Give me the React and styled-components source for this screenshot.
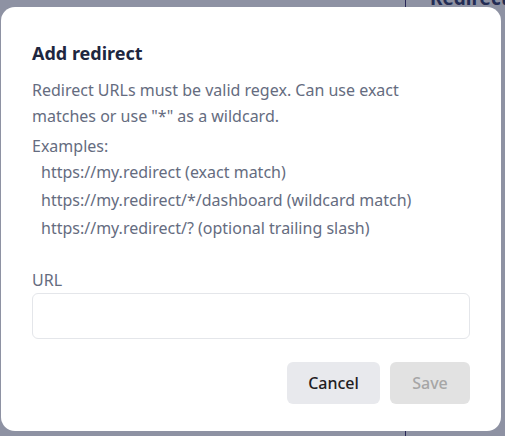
import styled, { createGlobalStyle } from "styled-components";

const GlobalStyle = createGlobalStyle`
  html, body {
    margin: 0;
    padding: 0;
  }
  body {
    font-family: "Noto Sans", "Open Sans", sans-serif;
    background: #f4f5f8;
  }
`;

const Page = styled.div`
  position: relative;
  width: 505px;
  height: 436px;
  overflow: hidden;
  background: #ffffff;
  display: grid;
  grid-template-columns: 406px 1fr;
`;

const Sidebar = styled.div`
  border-right: 1px solid #2a2060;
`;

const Content = styled.div`
  padding: 0 0 0 24px;
`;

const PageHeading = styled.div`
  margin-top: -13px;
  font-size: 19px;
  font-weight: 700;
  line-height: 22px;
  color: #1e2a5a;
  white-space: nowrap;
`;

const Overlay = styled.div`
  position: absolute;
  inset: 0;
  background: rgba(38, 46, 78, 0.52);
  display: flex;
  align-items: center;
  justify-content: center;
  padding: 7px 4px 5px 1px;
  box-sizing: border-box;
`;

const Dialog = styled.div`
  width: 500px;
  height: 424px;
  background: #ffffff;
  border-radius: 14px;
  box-sizing: border-box;
  padding: 34px 31px 27px 31px;
  display: flex;
  flex-direction: column;
`;

const Title = styled.h2`
  margin: 0 0 12px;
  font-size: 18px;
  font-weight: 700;
  line-height: 24px;
  color: #1e2640;
`;

const Text = styled.p`
  margin: 0 0 ${(p) => p.$gap || 0}px;
  max-width: 400px;
  font-size: 16px;
  line-height: 26px;
  color: #656c80;
`;

const Examples = styled.ul`
  list-style: none;
  margin: -1px 0 0;
  padding: 0 0 0 9px;
`;

const Example = styled.li`
  font-size: 16px;
  line-height: 28px;
  color: #656c80;
  white-space: nowrap;
`;

const Field = styled.label`
  display: flex;
  flex-direction: column;
  gap: 3px;
  margin-top: 28px;
  font-size: 16px;
  line-height: 20px;
  color: #656c80;
`;

const Input = styled.input`
  height: 46px;
  box-sizing: border-box;
  border: 1px solid #e4e6ea;
  border-radius: 6px;
  padding: 0 12px;
  font: inherit;
  outline: none;
`;

const Actions = styled.div`
  display: flex;
  justify-content: flex-end;
  gap: 10px;
  margin-top: 23px;
`;

const Button = styled.button`
  height: 42px;
  width: ${(p) => p.$width}px;
  border: 0;
  border-radius: 6px;
  font-family: inherit;
  font-size: 16px;
  font-weight: 500;
  background: ${(p) => (p.disabled ? "#e2e2e2" : "#e8e9ed")};
  color: ${(p) => (p.disabled ? "#a6a6a6" : "#1f2022")};
  cursor: ${(p) => (p.disabled ? "default" : "pointer")};
`;

export default function App() {
  return (
    <Page>
      <GlobalStyle />
      <Sidebar />
      <Content>
        <PageHeading>Redirects</PageHeading>
      </Content>
      <Overlay>
        <Dialog>
          <Title>Add redirect</Title>
          <Text $gap={4}>
            Redirect URLs must be valid regex. Can use exact matches or use
            "*" as a wildcard.
          </Text>
          <Text>Examples:</Text>
          <Examples>
            <Example>https://my.redirect (exact match)</Example>
            <Example>https://my.redirect/*/dashboard (wildcard match)</Example>
            <Example>https://my.redirect/? (optional trailing slash)</Example>
          </Examples>
          <Field>
            URL
            <Input type="text" />
          </Field>
          <Actions>
            <Button $width={93}>Cancel</Button>
            <Button $width={80} disabled>
              Save
            </Button>
          </Actions>
        </Dialog>
      </Overlay>
    </Page>
  );
}
